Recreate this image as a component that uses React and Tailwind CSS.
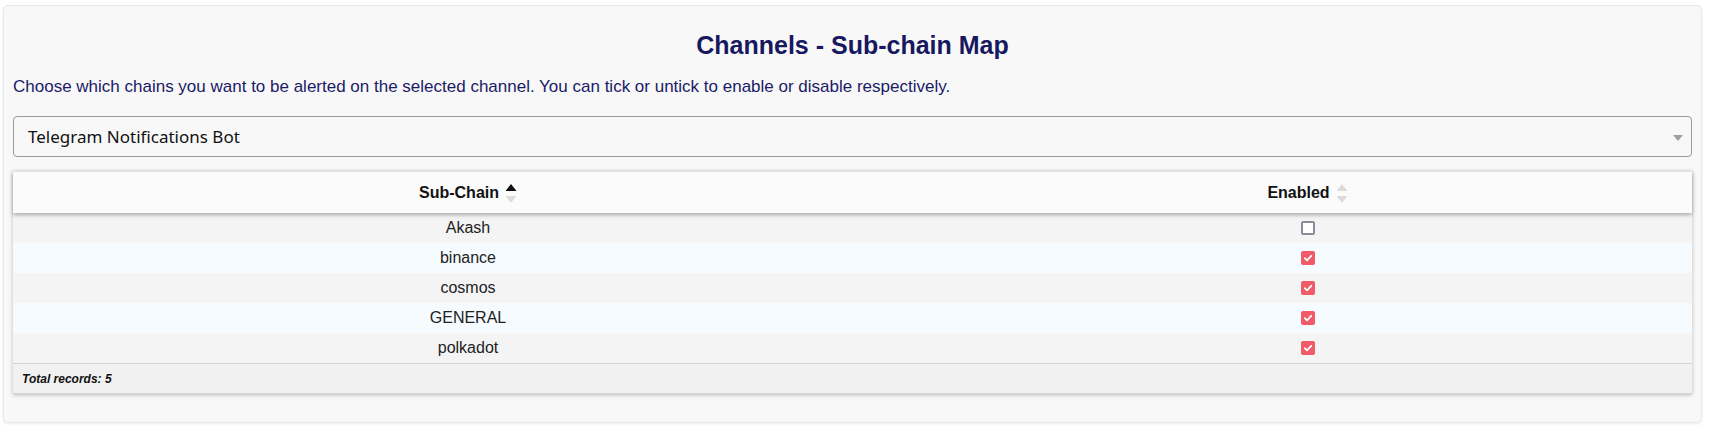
import React from "react";

const rows = [
  { name: "Akash", enabled: false },
  { name: "binance", enabled: true },
  { name: "cosmos", enabled: true },
  { name: "GENERAL", enabled: true },
  { name: "polkadot", enabled: true },
];

function SortIcon({ up = "#dcdcdc", down = "#dcdcdc" }) {
  return (
    <svg width="12" height="26" viewBox="0 0 12 26" className="ml-[6px] mt-[2px]">
      <path d="M0.5 10 L6 3 L11.5 10 Z" fill={up} />
      <path d="M0.5 15 L6 22 L11.5 15 Z" fill={down} />
    </svg>
  );
}

function Checkbox({ checked }) {
  if (checked) {
    return (
      <div className="w-[14px] h-[14px] rounded-[2px] bg-[#f15a69] flex items-center justify-center">
        <svg width="10" height="10" viewBox="0 0 10 10">
          <path d="M1.8 5.2 L4 7.3 L8.3 2.8" fill="none" stroke="white" strokeWidth="1.8" strokeLinecap="round" strokeLinejoin="round" />
        </svg>
      </div>
    );
  }
  return <div className="w-[14px] h-[14px] rounded-[2px] border-2 border-[#8b8a99] bg-white" />;
}

export default function App() {
  return (
    <div className="w-[1709px] h-[435px] bg-white pt-[5px] pl-[3px]" style={{ fontFamily: '"Liberation Sans", Arial, sans-serif' }}>
      <div className="w-[1699px] h-[418px] bg-[#f8f8f8] border border-[#e7e7ee] rounded-[5px] shadow-[0_1px_3px_rgba(0,0,0,0.08)] px-[9px]">
        <h1 className="text-[25px] font-bold text-[#171860] text-center leading-[30px] pt-[24px]">
          Channels - Sub-chain Map
        </h1>
        <p className="text-[17px] text-[#1b1b68] leading-[20px] mt-[17px]">
          Choose which chains you want to be alerted on the selected channel. You can tick or untick to enable or disable respectively.
        </p>
        <div className="mt-[19px] h-[41px] border border-[#9a9a9a] rounded-[4px] bg-[#f8f8f8] flex items-center justify-between pl-[14px] pr-[8px]">
          <span className="text-[17px] text-[#111]" style={{ fontFamily: '"Noto Sans", "Open Sans", sans-serif' }}>
            Telegram Notifications Bot
          </span>
          <svg width="10" height="6" viewBox="0 0 10 6" className="mt-[3px]">
            <path d="M0 0 L10 0 L5 6 Z" fill="#a0a0a0" />
          </svg>
        </div>
        <div className="mt-[14px] shadow-[0_1px_4px_rgba(0,0,0,0.25)]">
          <div className="relative z-10 flex h-[42px] bg-[#fbfbfb] border-t border-[#e4e4e4] shadow-[0_2px_4px_rgba(0,0,0,0.3)]">
            <div className="w-[910px] flex items-center justify-center text-[16px] font-bold text-[#111]">
              <span>Sub-Chain</span>
              <SortIcon up="#111111" down="#dedede" />
            </div>
            <div className="flex-1 flex items-center justify-center text-[16px] font-bold text-[#111]">
              <span>Enabled</span>
              <SortIcon />
            </div>
          </div>
          {rows.map((r, i) => (
            <div key={r.name} className={"flex h-[30px] " + (i % 2 === 0 ? "bg-[#f4f4f4]" : "bg-[#f5fbfe]")}>
              <div className="w-[910px] flex items-center justify-center text-[16px] text-[#222]">{r.name}</div>
              <div className="flex-1 flex items-center justify-center">
                <Checkbox checked={r.enabled} />
              </div>
            </div>
          ))}
          <div className="h-[31px] bg-[#f1f1f1] border-t border-b border-[#d4d4d4] flex items-center pl-[9px]">
            <span className="text-[12px] font-bold italic text-[#111]">Total records: 5</span>
          </div>
        </div>
      </div>
    </div>
  );
}
